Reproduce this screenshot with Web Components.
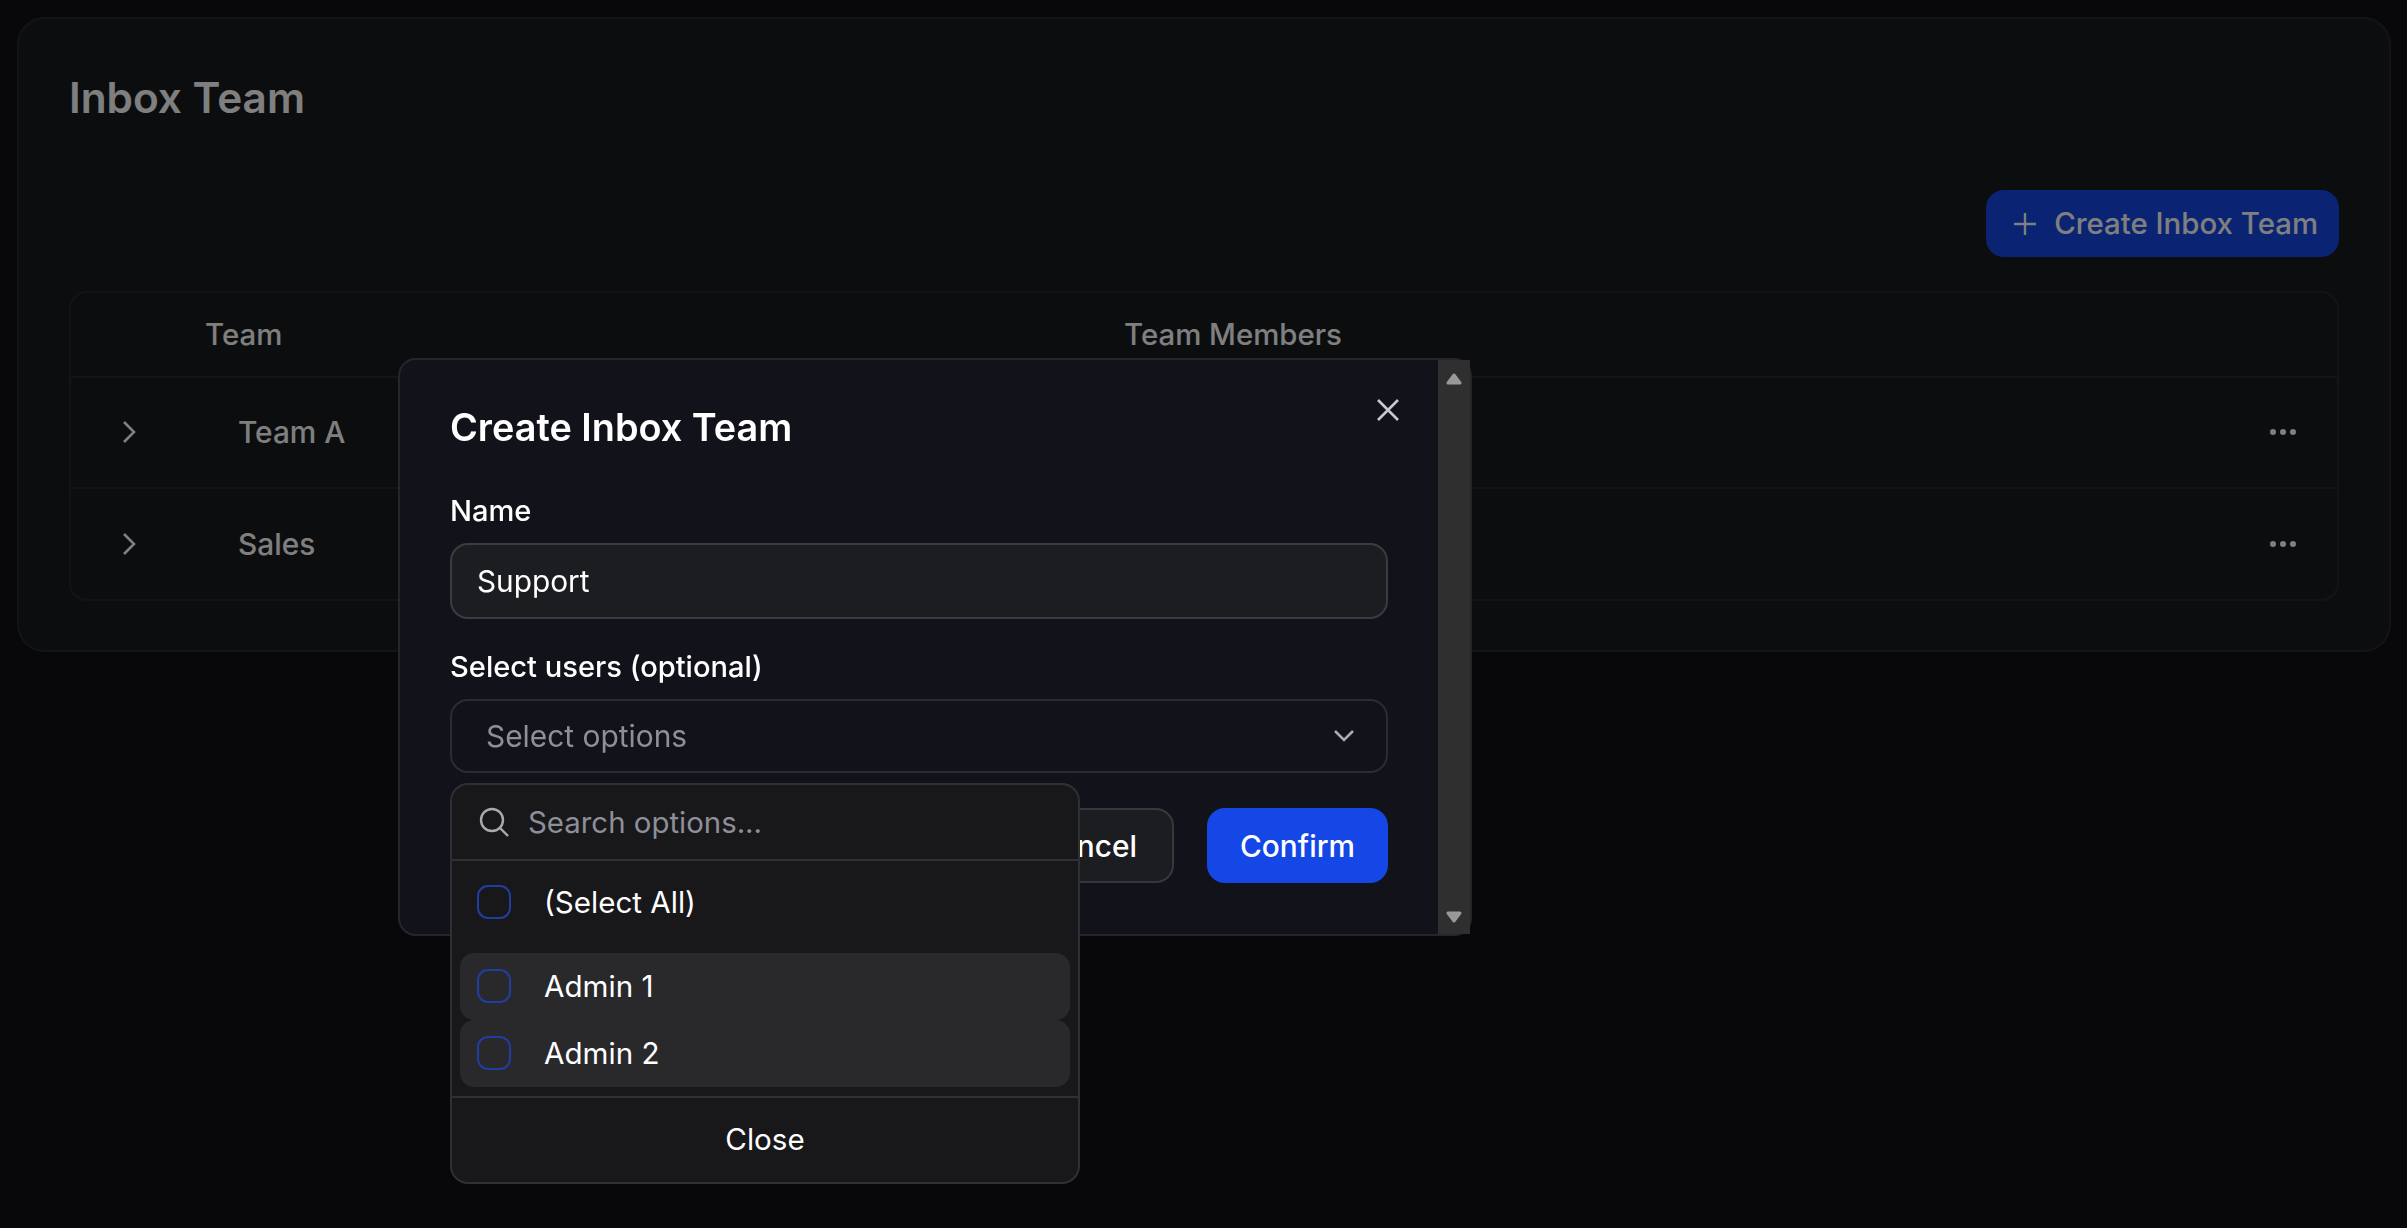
<!DOCTYPE html>
<html lang="en">
<head>
<meta charset="utf-8">
<title>Inbox Team</title>
<style>
  html, body { margin: 0; height: 100%; background: #101115; color: #fff; font-family: Inter, "Liberation Sans", sans-serif; overflow: hidden; }
</style>
</head>
<body>
<inbox-panel>
  <team-row name="Team A"></team-row>
  <team-row name="Sales"></team-row>
</inbox-panel>
<create-dialog></create-dialog>
<script>
const panelTemplate = document.createElement("template");
panelTemplate.innerHTML = `
  <style>
    :host { display: block; margin: 17px 16px 0 17px; height: 635px; box-sizing: border-box; padding: 41px 50px 0 50px;
      background: #191a1e; border: 2px solid #26282d; border-radius: 28px; }
    h1 { margin: 0; font-size: 42.3px; line-height: 76px; font-weight: 600; color: #fff; }
    .actions { display: flex; justify-content: flex-end; margin-top: 54px; height: 67px; }
    .primary { display: flex; align-items: center; gap: 17px; padding: 0 21px 0 27px; border-radius: 18px; background: #1447e6; color: #fff; font-size: 29.4px; font-weight: 500; }
    .table { margin-top: 34px; border: 2px solid #26282d; border-radius: 18px; }
    .head { display: grid; grid-template-columns: 134px 919px 1fr; height: 85px; box-sizing: border-box; align-items: center; font-size: 29.4px; font-weight: 500; border-bottom: 2px solid #26282d; }
    .head span:first-child { grid-column: 2; }
    svg { display: block; }
  </style>
  <h1>Inbox Team</h1>
  <div class="actions">
    <div class="primary">
      <svg width="24" height="24" viewBox="0 0 24 24" fill="none" stroke="#fff" stroke-width="2.4"><path d="M12 1v22M1 12h22"/></svg>
      <span>Create Inbox Team</span>
    </div>
  </div>
  <div class="table">
    <div class="head"><span>Team</span><span>Team Members</span></div>
    <slot></slot>
  </div>
`;

class InboxPanel extends HTMLElement {
  constructor() {
    super();
    this.attachShadow({ mode: "open" });
  }
  connectedCallback() {
    this.shadowRoot.append(panelTemplate.content.cloneNode(true));
  }
}
customElements.define("inbox-panel", InboxPanel);

const rowTemplate = document.createElement("template");
rowTemplate.innerHTML = `
  <style>
    :host { display: flex; align-items: center; height: 110.5px; box-sizing: border-box; border-bottom: 2px solid #26282d; font-size: 29.8px; font-weight: 500; }
    :host(:last-child) { border-bottom: 0; }
    .chev { width: 115px; display: flex; justify-content: center; }
    .name { flex: 1; margin-left: 52px; }
    .more { margin-right: 41px; display: flex; gap: 4px; }
    .more i { width: 6px; height: 6px; border-radius: 50%; background: #fff; }
    svg { display: block; }
  </style>
  <div class="chev"><svg width="14" height="22" viewBox="0 0 14 22" fill="none" stroke="#fff" stroke-width="2.6"><path d="M2 1l10 10-10 10"/></svg></div>
  <div class="name"></div>
  <div class="more"><i></i><i></i><i></i></div>
`;

class TeamRow extends HTMLElement {
  constructor() {
    super();
    this.attachShadow({ mode: "open" });
  }
  connectedCallback() {
    this.shadowRoot.append(rowTemplate.content.cloneNode(true));
    this.shadowRoot.querySelector(".name").textContent = this.getAttribute("name");
  }
}
customElements.define("team-row", TeamRow);

const dialogTemplate = document.createElement("template");
dialogTemplate.innerHTML = `
  <style>
    :host { position: fixed; inset: 0; display: block; background: rgba(0,0,0,.5); }
    .dialog { position: absolute; left: 398px; top: 358px; width: 1074px; height: 578px; box-sizing: border-box; display: flex;
      background: #12131a; border: 2px solid #24262c; border-radius: 18px; }
    .body { flex: 1; min-width: 0; padding: 29px 50px 0 50px; position: relative; }
    .bar { width: 32px; background: #2f2f2f; display: flex; flex-direction: column; justify-content: space-between; align-items: center; padding: 13px 0 11px; box-sizing: border-box; }
    h2 { margin: 0; font-size: 37.8px; line-height: 76px; font-weight: 600; }
    .close { position: absolute; right: 39px; top: 39px; }
    label { display: block; font-size: 29.1px; font-weight: 500; line-height: 40px; }
    .name-label { margin-top: 26px; }
    .input { margin-top: 12px; height: 76px; box-sizing: border-box; border: 2px solid #3a3c42; border-radius: 18px; background: #1c1d21; padding: 0 25px; display: flex; align-items: center; font-size: 29.8px; }
    .users-label { margin-top: 28px; }
    .select { margin-top: 12px; height: 74px; box-sizing: border-box; border: 2px solid #2a2c32; border-radius: 18px; padding: 0 32px 0 34px; display: flex; align-items: center; justify-content: space-between; font-size: 29.9px; color: #8e8f98; }
    .footer { display: flex; justify-content: flex-end; gap: 33px; margin-top: 35px; }
    .btn { height: 75px; box-sizing: border-box; border-radius: 18px; display: flex; align-items: center; justify-content: center; font-size: 29.8px; font-weight: 500; }
    .cancel { padding: 0 35px; border: 2px solid #36383d; background: #1c1d21; }
    .confirm { width: 181px; background: #1447e6; }
    svg { display: block; }
    multi-select { position: absolute; left: 50px; top: 423px; }
  </style>
  <div class="dialog">
    <div class="body">
      <h2>Create Inbox Team</h2>
      <svg class="close" width="22" height="22" viewBox="0 0 22 22" fill="none" stroke="#c9c9cc" stroke-width="2.6"><path d="M1 1l20 20M21 1L1 21"/></svg>
      <label class="name-label">Name</label>
      <div class="input">Support</div>
      <label class="users-label">Select users (optional)</label>
      <div class="select">
        <span>Select options</span>
        <svg width="20" height="12" viewBox="0 0 20 12" fill="none" stroke="#aaa" stroke-width="2.6"><path d="M1 1l9 9 9-9"/></svg>
      </div>
      <div class="footer">
        <div class="btn cancel">Cancel</div>
        <div class="btn confirm">Confirm</div>
      </div>
      <multi-select></multi-select>
    </div>
    <div class="bar">
      <svg width="16" height="12" viewBox="0 0 16 12"><path d="M8 2l6 8H2z" fill="#999" stroke="#999" stroke-width="3" stroke-linejoin="round"/></svg>
      <svg width="16" height="12" viewBox="0 0 16 12"><path d="M8 10L2 2h12z" fill="#999" stroke="#999" stroke-width="3" stroke-linejoin="round"/></svg>
    </div>
  </div>
`;

class CreateDialog extends HTMLElement {
  constructor() {
    super();
    this.attachShadow({ mode: "open" });
  }
  connectedCallback() {
    this.shadowRoot.append(dialogTemplate.content.cloneNode(true));
  }
}
customElements.define("create-dialog", CreateDialog);

const selectTemplate = document.createElement("template");
selectTemplate.innerHTML = `
  <style>
    :host { display: block; width: 630px; height: 401px; box-sizing: border-box; background: #18181b; border: 2px solid #2e3035; border-radius: 18px; font-size: 29.6px; color: #fff; }
    .search { height: 74px; display: flex; align-items: center; gap: 19px; padding-left: 27px; border-bottom: 2px solid #2e3035; color: #8e8f98; font-size: 29.4px; }
    .option { height: 67px; margin: 0 8px; padding-left: 17px; display: flex; align-items: center; gap: 33px; border-radius: 14px; }
    .all { height: 82px; margin-bottom: 9.5px; }
    .hover { background: #29292c; }
    .box { width: 34px; height: 34px; box-sizing: border-box; border: 2.4px solid #1f3ea0; border-radius: 11px; flex: none; }
    .close { margin-top: 9px; border-top: 2px solid #2e3035; height: 83px; display: flex; align-items: center; justify-content: center; }
    svg { display: block; }
  </style>
  <div class="search">
    <svg width="30" height="30" viewBox="0 0 30 30" fill="none" stroke="#aaa" stroke-width="2.4"><circle cx="13" cy="13" r="11"/><path d="M21 21l8 8"/></svg>
    <span>Search options...</span>
  </div>
  <div class="option all"><div class="box"></div><span>(Select All)</span></div>
  <div class="option hover"><div class="box"></div><span>Admin 1</span></div>
  <div class="option hover"><div class="box"></div><span>Admin 2</span></div>
  <div class="close">Close</div>
`;

class MultiSelect extends HTMLElement {
  constructor() {
    super();
    this.attachShadow({ mode: "open" });
  }
  connectedCallback() {
    this.shadowRoot.append(selectTemplate.content.cloneNode(true));
  }
}
customElements.define("multi-select", MultiSelect);
</script>
</body>
</html>
